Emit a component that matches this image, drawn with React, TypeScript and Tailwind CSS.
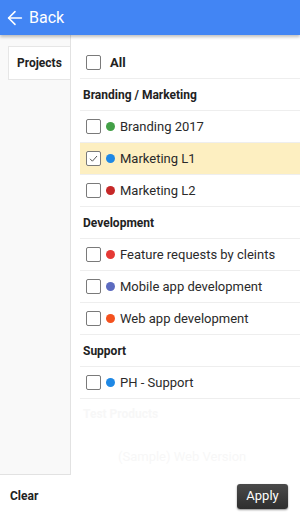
import { ArrowLeft } from "lucide-react";

type Item = { label: string; color: string; checked?: boolean };
type Group = { title: string; items: Item[] };

const groups: Group[] = [
  {
    title: "Branding / Marketing",
    items: [
      { label: "Branding 2017", color: "bg-[#43a047]" },
      { label: "Marketing L1", color: "bg-[#1e88e5]", checked: true },
      { label: "Marketing L2", color: "bg-[#c62828]" },
    ],
  },
  {
    title: "Development",
    items: [
      { label: "Feature requests by cleints", color: "bg-[#e53935]" },
      { label: "Mobile app development", color: "bg-[#5c6bc0]" },
      { label: "Web app development", color: "bg-[#f4511e]" },
    ],
  },
  {
    title: "Support",
    items: [{ label: "PH - Support", color: "bg-[#1e88e5]" }],
  },
];

const Checkbox = ({ checked }: { checked?: boolean }) => (
  <span className="flex h-[15px] w-[15px] shrink-0 items-center justify-center rounded-[2px] border-[1.5px] border-[#7a7a7a] bg-white">
    {checked && (
      <svg width="11" height="11" viewBox="0 0 11 11" fill="none">
        <path d="M2 5.8 L4.4 8.2 L9 3" stroke="#555" strokeWidth="1" />
      </svg>
    )}
  </span>
);

const App = () => {
  return (
    <div className="flex h-[517px] w-[300px] flex-col overflow-hidden bg-white font-['Roboto',sans-serif] text-[#222]">
      {/* Header */}
      <div className="relative z-10 flex h-[35px] shrink-0 items-center gap-[3px] bg-[#4285f4] pl-[4px] text-white shadow-[0_2px_3px_rgba(0,0,0,0.25)]">
        <ArrowLeft size={22} strokeWidth={1.7} />
        <span className="text-[16px] leading-none">Back</span>
      </div>

      <div className="flex min-h-0 flex-1">
        {/* Sidebar */}
        <aside className="w-[71px] shrink-0 border-r border-b border-[#e2e2e2] bg-[#f9f9f9] pt-[11px] pl-[8px]">
          <div className="flex h-[34px] items-center border-y border-l border-[#e6e6e6] bg-white pl-[8px] text-[12px] font-bold">
            Projects
          </div>
        </aside>

        {/* List */}
        <div className="flex-1 pt-[12px] pl-[9px]">
          <div className="flex h-[32px] items-center gap-[9px] border-b border-[#eeeeee] pl-[6px]">
            <Checkbox />
            <span className="text-[13px] font-bold">All</span>
          </div>
          {groups.map((g) => (
            <div key={g.title}>
              <div className="flex h-[32px] items-center border-b border-[#eeeeee] pl-[3px] text-[12px] font-bold">
                {g.title}
              </div>
              {g.items.map((it) => (
                <div
                  key={it.label}
                  className={
                    "flex h-[32px] items-center border-b border-[#eeeeee] pl-[6px] " +
                    (it.checked ? "bg-[#fdefc1]" : "")
                  }
                >
                  <Checkbox checked={it.checked} />
                  <span className={"ml-[5px] h-[9px] w-[9px] rounded-full " + it.color} />
                  <span className="ml-[5px] text-[13px] text-[#2a2a2a]">{it.label}</span>
                </div>
              ))}
            </div>
          ))}
          <div className="mt-[6px] pl-[3px] text-[12px] font-bold text-[#f7f7f7]">Test Products</div>
          <div className="mt-[24px] pl-[38px] text-[13px] text-[#f7f7f7]">(Sample) Web Version</div>
        </div>
      </div>

      {/* Footer */}
      <div className="flex h-[42px] shrink-0 items-center justify-between pr-[12px] pl-[10px]">
        <span className="text-[12px] font-bold">Clear</span>
        <button className="h-[25px] w-[51px] rounded-[3px] bg-gradient-to-b from-[#4a4a4a] to-[#2e2e2e] text-[13px] text-white shadow-[0_1px_2px_rgba(0,0,0,0.45)]">
          Apply
        </button>
      </div>
    </div>
  );
};

export default App;
